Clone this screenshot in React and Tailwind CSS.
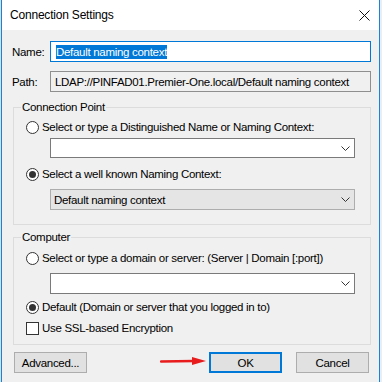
const font = { fontFamily: '"Liberation Sans", Arial, sans-serif' };

function Chevron() {
  return (
    <svg width="9" height="5" viewBox="0 0 9 5" className="mr-[4px]">
      <path d="M0.5 0.5 L4.5 4.5 L8.5 0.5" fill="none" stroke="#333" strokeWidth="1" />
    </svg>
  );
}

function Radio({ checked, label }) {
  return (
    <div className="flex items-center h-[16px] pl-[12px]">
      <span className="w-[13px] h-[13px] rounded-full border border-[#333] bg-white flex items-center justify-center shrink-0">
        {checked && <span className="w-[7px] h-[7px] rounded-full bg-[#333]" />}
      </span>
      <span className="ml-[3px] whitespace-nowrap">{label}</span>
    </div>
  );
}

function Combo({ text, readonly, h = "h-[20px]", mt }) {
  return (
    <div
      className={`ml-[36px] w-[305px] ${h} ${mt} border flex items-center justify-between ${
        readonly ? "bg-[#e5e5e5] border-[#adadad]" : "bg-white border-[#7a7a7a]"
      }`}
    >
      <span className="pl-[3px]">{text}</span>
      <Chevron />
    </div>
  );
}

function Button({ children, primary, className = "" }) {
  return (
    <button
      className={`w-[73px] h-[21px] bg-[#e1e1e1] flex items-center justify-center ${
        primary ? "border-2 border-[#0078d7]" : "border border-[#adadad]"
      } ${className}`}
    >
      {children}
    </button>
  );
}

export default function App() {
  return (
    <div
      className="w-[382px] h-[382px] flex bg-white overflow-hidden text-[11.5px] tracking-[-0.3px] text-black leading-[16px]"
      style={font}
    >
      <div className="w-px bg-[#d6dfe9]" />
      <div className="w-[379px] h-full border-x border-[#1883d7] bg-[#f0f0f0] flex flex-col relative">
        <div className="h-[30px] bg-white flex items-center justify-between pl-[8px] pr-[8px]">
          <span className="text-[12px] tracking-[-0.2px]">Connection Settings</span>
          <svg width="11" height="11" viewBox="0 0 11 11" className="mr-[1px]">
            <path d="M0.5 0.5 L10.5 10.5 M10.5 0.5 L0.5 10.5" stroke="#111" strokeWidth="1" />
          </svg>
        </div>

        <div className="flex items-center mt-[11px] pl-[10px]">
          <span className="w-[38px]">Name:</span>
          <div className="w-[321px] h-[21px] border border-[#0078d7] bg-white flex items-center pl-[5px]">
            <span className="bg-[#0078d7] text-white leading-[14px]">Default naming context</span>
          </div>
        </div>

        <div className="flex items-center mt-[9px] pl-[10px]">
          <span className="w-[38px]">Path:</span>
          <div className="w-[321px] h-[21px] border border-[#8f8f8f] bg-[#f0f0f0] flex items-center pl-[4px] whitespace-nowrap">
            LDAP://PINFAD01.Premier-One.local/Default naming context
          </div>
        </div>

        <fieldset className="ml-[11px] w-[358px] mt-[7px] border border-[#dcdcdc] pb-[14px]">
          <legend className="ml-[7px] px-[1px]">Connection Point</legend>
          <div className="mt-[4px]">
            <Radio label="Select or type a Distinguished Name or Naming Context:" />
          </div>
          <Combo mt="mt-[3px]" />
          <div className="mt-[8px]">
            <Radio checked label="Select a well known Naming Context:" />
          </div>
          <Combo mt="mt-[7px]" h="h-[21px]" readonly text="Default naming context" />
        </fieldset>

        <fieldset className="ml-[11px] w-[358px] mt-[4px] border border-[#dcdcdc] pb-[8px]">
          <legend className="ml-[7px] px-[1px]">Computer</legend>
          <div className="mt-[5px]">
            <Radio label="Select or type a domain or server: (Server | Domain [:port])" />
          </div>
          <Combo mt="mt-[7px]" h="h-[21px]" />
          <div className="mt-[5px]">
            <Radio checked label="Default (Domain or server that you logged in to)" />
          </div>
          <div className="flex items-center h-[16px] pl-[12px] mt-[5px]">
            <span className="w-[13px] h-[13px] border border-[#333] bg-white shrink-0" />
            <span className="ml-[3px]">Use SSL-based Encryption</span>
          </div>
        </fieldset>

        <div className="flex items-center mt-[7px] pl-[12px]">
          <Button>Advanced...</Button>
          <Button primary className="ml-[122px]">OK</Button>
          <Button className="ml-[14px]">Cancel</Button>
        </div>

        <svg width="48" height="10" viewBox="0 0 48 10" className="absolute left-[158px] top-[356px]">
          <path d="M1 5.5 L34 5" stroke="#e81c1c" strokeWidth="2.5" strokeLinecap="round" />
          <path d="M32 1 L46 5 L32 9 Z" fill="#e81c1c" />
        </svg>
      </div>
      <div className="w-[2px] bg-[#e8eef5]" />
    </div>
  );
}
